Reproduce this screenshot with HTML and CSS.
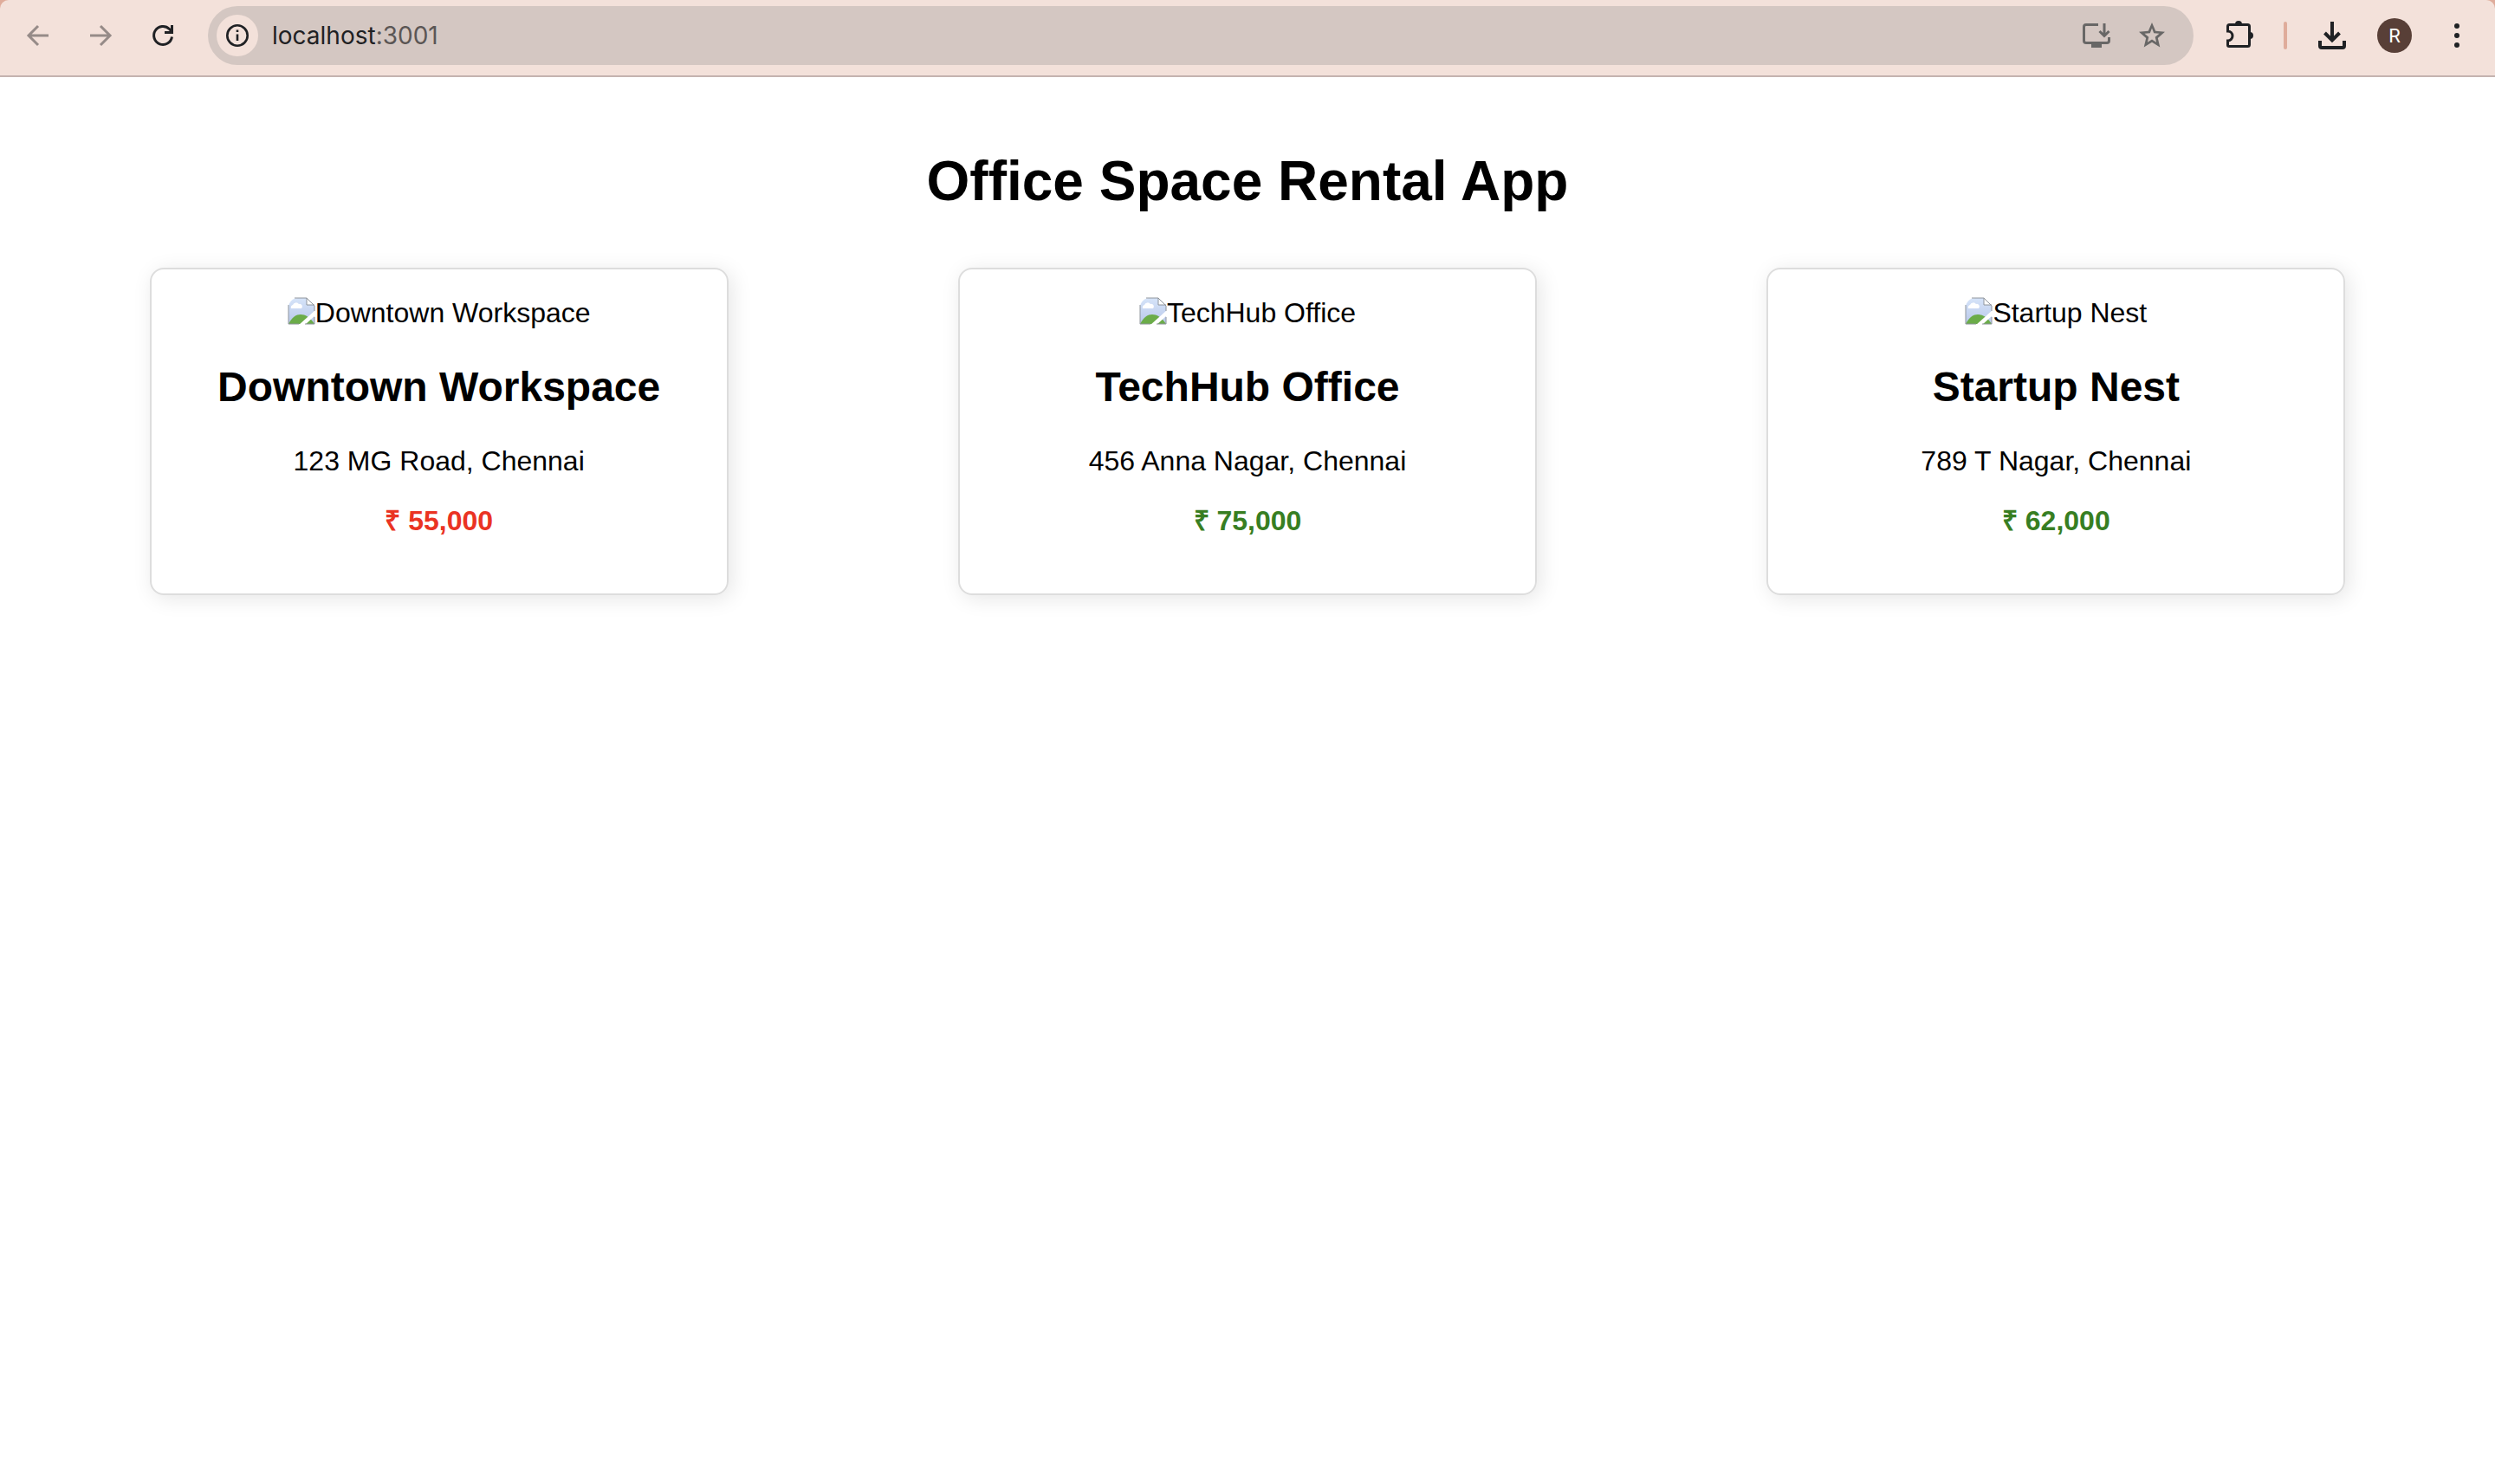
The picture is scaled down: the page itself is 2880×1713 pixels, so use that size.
FILE: index.html
```html
<!DOCTYPE html>
<html lang="en">
<head>
<meta charset="utf-8">
<meta name="viewport" content="width=device-width, initial-scale=1">
<title>Office Space Rental App</title>
<link rel="stylesheet" href="styles.css">
</head>
<body>
<svg class="defs" aria-hidden="true">
  <defs>
    <linearGradient id="sky" x1="0" y1="0" x2="0" y2="1">
      <stop offset="0" stop-color="#d6e4f9"/><stop offset="1" stop-color="#b9c8ea"/>
    </linearGradient>
    <symbol id="missing" viewBox="0 0 32 32">
      <path d="M1 12A11 11 0 0 1 12 1H22L31 10V31H1Z" fill="url(#sky)"/>
      <path d="M4 13a3 3 0 0 1 2-4 4 4 0 0 1 7-1 3 3 0 0 1 3 5Z" fill="#fff"/>
      <path d="M1 31C5 23 10 20 15 20S26 23 31 31Z" fill="#6bac49"/>
      <path d="M13 32L32 15V21L20 32Z" fill="#fff"/>
      <path d="M22 1V9H31Z" fill="#fff"/>
      <path d="M1 31V9M8 1H22L31 10V16M22 1V9H31M1 31H13M20 31H31V23" fill="none" stroke="#8e949c" stroke-width="1"/>
    </symbol>
  </defs>
</svg>
<header class="frame">
  <nav class="toolbar" aria-label="Browser">
    <button class="tool tool-muted" type="button" aria-label="Back"><svg viewBox="0 0 40 40"><path d="M32 20H10M20 9L9 20L20 31"/></svg></button>
    <button class="tool tool-muted" type="button" aria-label="Forward"><svg viewBox="0 0 40 40"><path d="M8 20H30M20 9L31 20L20 31"/></svg></button>
    <button class="tool" type="button" aria-label="Reload"><svg viewBox="0 0 40 40"><path d="M30.500 21.500A10.500 10.500 0 1 1 27.500 12.500L30 15M30.500 8V16.500H22" stroke-width="3"/></svg></button>
    <div class="address">
      <button class="info" type="button" aria-label="Site information"><svg viewBox="0 0 40 40"><circle cx="20" cy="20" r="11.700" stroke-width="2.600"/><path d="M20 18.500V26M20 13.500V16" stroke-width="2.600"/></svg></button>
      <div class="url" role="textbox" contenteditable="true" spellcheck="false" aria-label="Address"><span class="host">localhost</span>:3001</div>
      <button class="tool tool-soft" type="button" aria-label="Install app"><svg viewBox="0 0 40 40"><path d="M22 7.500H8Q5.500 7.500 5.500 10V26Q5.500 28.500 8 28.500H32Q34.500 28.500 34.500 26V22M29 6V20M23.500 15L29 20.500L34.500 15" stroke-width="3"/><path d="M14 28H26V34H14Z" class="solid"/></svg></button>
      <button class="tool tool-soft" type="button" aria-label="Bookmark"><svg viewBox="0 0 40 40"><path class="solid" fill-rule="evenodd" d="M20 5L24.200 14.800L35 15.800L26.800 22.900L29.300 33.400L20 27.800L10.700 33.400L13.200 22.900L5 15.800L15.800 14.800ZM20 11.500L17.800 17.200L11.500 17.800L16.300 21.800L14.900 27.800L20 24.600L25.100 27.800L23.700 21.800L28.500 17.800L22.200 17.200Z"/></svg></button>
    </div>
    <button class="tool" type="button" aria-label="Extensions"><svg viewBox="0 0 40 40"><path d="M9.500 7.500H30.500Q32.500 7.500 32.500 9.500V30.500Q32.500 32.500 30.500 32.500H9Q7.500 32.500 7.500 31V26A5.500 5.500 0 0 0 7.500 15V9.500Q7.500 7.500 9.500 7.500Z" stroke-width="3"/><path d="M16 7A4 4 0 0 1 24 7ZM33 16A4 4 0 0 1 33 24Z" class="solid"/></svg></button>
    <span class="divider"></span>
    <button class="tool" type="button" aria-label="Downloads"><svg viewBox="0 0 40 40"><path d="M20 4V25M11.500 17L20 25.500L28.500 17M6 26V32Q6 34 8 34H32Q34 34 34 32V26" stroke-width="4"/></svg></button>
    <button class="avatar" type="button" aria-label="Profile">R</button>
    <button class="tool" type="button" aria-label="Menu"><svg viewBox="0 0 40 40"><g class="solid"><circle cx="20" cy="9" r="3"/><circle cx="20" cy="20" r="3"/><circle cx="20" cy="31" r="3"/></g></svg></button>
  </nav>
</header>
<main class="page">
  <h1 class="title">Office Space Rental App</h1>
  <div class="listing">
    <article class="card">
      <div class="photo"><svg class="missing" aria-hidden="true"><use href="#missing"/></svg><span>Downtown Workspace</span></div>
      <h2 class="name">Downtown Workspace</h2>
      <p class="text">123 MG Road, Chennai</p>
      <p class="text price price-low">₹ 55,000</p>
    </article>
    <article class="card">
      <div class="photo"><svg class="missing" aria-hidden="true"><use href="#missing"/></svg><span>TechHub Office</span></div>
      <h2 class="name">TechHub Office</h2>
      <p class="text">456 Anna Nagar, Chennai</p>
      <p class="text price">₹ 75,000</p>
    </article>
    <article class="card">
      <div class="photo"><svg class="missing" aria-hidden="true"><use href="#missing"/></svg><span>Startup Nest</span></div>
      <h2 class="name">Startup Nest</h2>
      <p class="text">789 T Nagar, Chennai</p>
      <p class="text price">₹ 62,000</p>
    </article>
  </div>
</main>
</body>
</html>
```
FILE: styles.css
```css
* { box-sizing: border-box; }

body {
  margin: 0;
  background: #fff;
  color: #000;
  font: 32px/37px "Liberation Sans", Arial, sans-serif;
}

button {
  flex: none;
  margin: 0;
  padding: 0;
  border: 0;
  background: none;
  font: inherit;
  color: inherit;
}

.defs { position: absolute; width: 0; height: 0; }

/* Browser toolbar */
.frame { background: #dfac9b; }

.toolbar {
  display: flex;
  align-items: center;
  gap: 32px;
  padding: 7px 24px 12px;
  border-bottom: 2px solid #c4b3b0;
  border-radius: 10px 10px 0 0;
  background: #f3e1da;
  color: #1f2124;
}

.tool { width: 40px; height: 40px; }
.tool-muted { color: #968b88; }
.tool-soft { color: #686766; }

.tool svg, .info svg {
  display: block;
  width: 40px;
  height: 40px;
  fill: none;
  stroke: currentColor;
  stroke-width: 3;
}

.tool .solid { fill: currentColor; stroke: none; }

.address {
  flex: 1;
  display: flex;
  align-items: center;
  gap: 16px;
  height: 68px;
  padding: 0 28px 0 10px;
  border-radius: 34px;
  background: #d4c7c2;
}

.address .tool + .tool { margin-left: 8px; }

.info {
  display: grid;
  place-items: center;
  width: 48px;
  height: 48px;
  border-radius: 50%;
  background: #f3e1da;
}

.url {
  flex: 1;
  font-family: Inter, Roboto, sans-serif;
  font-size: 28px;
  color: #5b5655;
  outline: 0;
}

.host { color: #1f2124; }

.divider {
  width: 4px;
  height: 32px;
  border-radius: 2px;
  background: #dfac9b;
}

.avatar {
  width: 40px;
  height: 40px;
  border-radius: 50%;
  background: #583f37;
  color: #fff;
  font-family: Roboto, sans-serif;
  font-size: 22px;
}

/* Listing page */
.page { padding: 40px; text-align: center; }

.title {
  margin: 43px 0;
  font-size: 64px;
  line-height: 74px;
}

.listing {
  display: flex;
  flex-wrap: wrap;
  justify-content: space-around;
  padding-top: 20px;
}

.card {
  width: 668px;
  padding: 32px;
  border: 2px solid #ddd;
  border-radius: 16px;
  box-shadow: 4px 4px 24px rgba(0, 0, 0, 0.1);
}

.photo { display: flex; justify-content: center; }
.missing { width: 32px; height: 32px; }

.name {
  margin: 40px 0;
  font-size: 48px;
  line-height: 54px;
}

.text { margin: 32px 0; }
.text:last-child { margin-bottom: 33px; }
.price { font-weight: bold; color: #377e22; }
.price-low { color: #ea3323; }
```
